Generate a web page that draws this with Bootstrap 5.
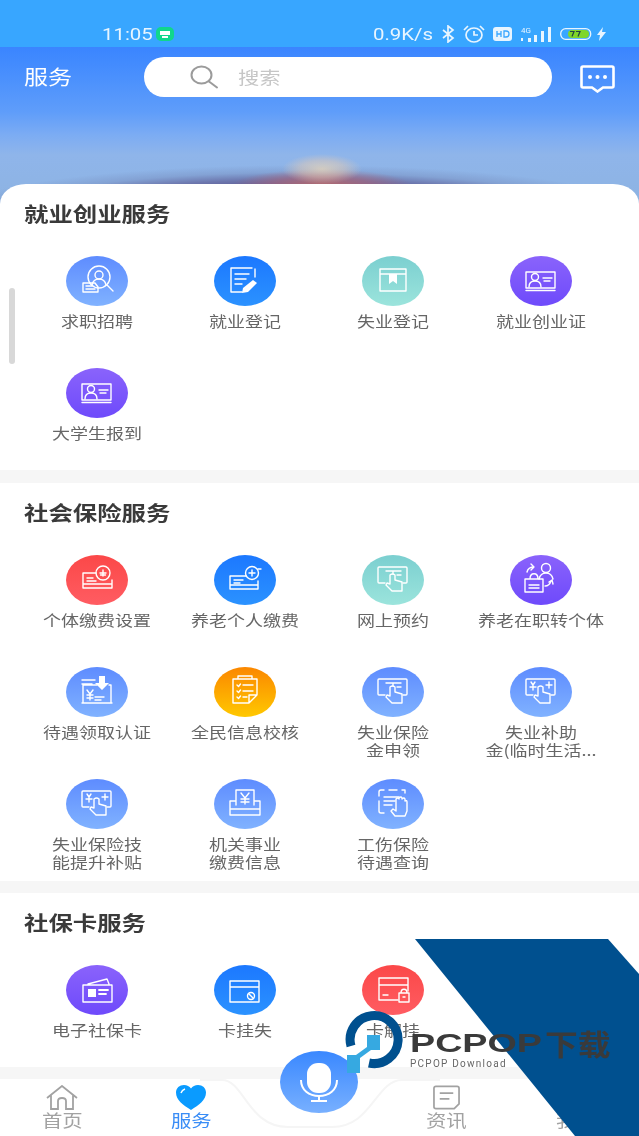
<!DOCTYPE html>
<html lang="zh-CN">
<head>
<meta charset="utf-8">
<title>服务</title>
<link href="https://cdn.jsdelivr.net/npm/bootstrap@5.3.0/dist/css/bootstrap.min.css" rel="stylesheet">
<style>
html,body{margin:0;background:#fff}
.app{width:639px;height:1136px;overflow:hidden;position:relative;font-family:"Noto Sans CJK SC","Noto Sans",sans-serif;filter:blur(.55px);background:#fff}
.stat{height:47px;background:#38a6ff;color:#e8f5ff;font-family:Roboto,"Liberation Sans",sans-serif;padding:20px 33px 0 102px;position:relative;z-index:2}
.stat-txt{display:inline-block;font-size:17px;line-height:26px;transform:scaleX(1.2);transform-origin:left center;white-space:nowrap}
.hdr{height:157px;padding-top:10px;background:
 radial-gradient(ellipse 40px 15px at 322px 122px,rgba(240,216,180,.7) 0,rgba(236,205,175,.45) 55%,rgba(230,190,160,0) 100%),
 radial-gradient(ellipse 90px 17px at 322px 139px,rgba(190,108,105,.9) 0,rgba(170,100,120,.6) 55%,rgba(140,90,130,0) 100%),
 radial-gradient(ellipse 350px 50px at 300px 168px,#5f5f98 0,#5f5f98 60%,rgba(100,104,160,.8) 71%,rgba(115,135,185,.4) 85%,rgba(125,155,210,0) 100%),
 linear-gradient(#3a85ff 0,#4a90fd 30px,#5f9dfa 65px,#7cacf3 88px,#8fb5ea 108px,#8db3e2 157px)}
.hdr-t{width:144px;padding-left:24px;color:#fff;font-size:20px;line-height:40px;white-space:nowrap}
.hdr-t span{display:inline-block;transform:scaleX(1.2);transform-origin:left center}
.pill{width:408px;height:40px;background:#fff;border-radius:20px;padding-left:46px}
.pill-t{color:#c6c6c6;font-size:17.5px;margin-left:19px;display:inline-block;transform:scaleX(1.22);transform-origin:left center}
.msg{margin-left:28px;margin-top:8px}
.sect{background:#fff;padding:0 24px 0 23px;position:relative;display:flow-root}
.sect-first{margin-top:-20px;border-radius:26px 26px 0 0/20px 20px 0 0}
.sect-h{height:72px;padding-top:12px;line-height:36px;font-size:20px;font-weight:700;color:#3a3a3a;white-space:nowrap;margin:0}
.sect-h span{display:inline-block;margin-left:1px;transform:scaleX(1.22);transform-origin:left center}
.gridwrap{margin-bottom:-10px}
.cell{height:112px;text-align:center}
.bub{width:62px;height:50px;border-radius:50%;margin:0 auto 6px;display:block}
.bub svg{display:block;width:62px;height:50px;fill:none;stroke:#fff;stroke-width:1.4;stroke-linejoin:round;stroke-linecap:round}
.g-lb{background:linear-gradient(#5e8cff,#80b2ff)}
.g-bl{background:linear-gradient(#1c78ff,#2b92ff)}
.g-te{background:linear-gradient(#7bcfd0,#9be4dc)}
.g-pu{background:linear-gradient(#8a63fb,#6e4afb)}
.g-re{background:linear-gradient(#fb4848,#ff5c62)}
.g-or{background:linear-gradient(#fb8700,#ffc800)}
.lbl{color:#666;font-size:15px;line-height:18px;white-space:nowrap;transform:scaleX(1.2)}
.band{height:12px;background:#f6f6f6}
.band-a{height:13px}
.tabs{height:57px;background:#fff;position:relative}
.tab{flex:1 1 0;text-align:center;padding-top:6px;color:#a2a2a2;font-size:17px;line-height:20px;position:relative}
.tab svg{display:block;margin:0 auto}
.tab span{display:block;margin-top:0;transform:scaleX(1.2);white-space:nowrap}
.tab-l{padding-right:4px}
.tab-m{padding-right:6px}
.tab-on{color:#3a8df6}
.notch{position:absolute;left:200px;top:0}
.micb{position:absolute;left:280px;top:1051px;width:78px;height:62px;border-radius:50%;background:linear-gradient(#3a88ff,#78b0ff)}
.sbar{position:absolute;left:9px;top:288px;width:6px;height:76px;border-radius:3px;background:#d8d8d8}
.wmk{position:absolute;left:0;top:0}
.w1,.w2,.w3{position:absolute;white-space:nowrap;transform-origin:left center;color:#3a3a3a}
.w1{left:410px;top:1025px;font:700 26px/36px "Liberation Sans",sans-serif;transform:scaleX(1.45)}
.w2{left:545px;top:1022px;font-size:29px;line-height:42px;font-weight:700;transform:scaleX(1.13)}
.w3{left:410px;top:1057px;font:400 10px/14px Roboto,sans-serif;letter-spacing:1.25px;color:#666}
</style>
</head>
<body>
<svg width="0" height="0" style="position:absolute">
<defs>
<symbol id="i-job" viewBox="0 0 62 50"><circle cx="33" cy="21" r="11"/><circle cx="33" cy="19" r="4"/><path d="M26 29c1-5 4-6 7-6s6 1 7 6M41 29l6 6"/><path d="M17 27h12l3 4v5H17zM20 30h6M20 33h9"/></symbol>
<symbol id="i-doc" viewBox="0 0 62 50"><path d="M38 12H17v24h11M41 13v8M21 18h14M21 23h11M21 28h7"/><path fill="#fff" stroke="none" d="M39 24l4 3-9 9-6 1 1-5z"/></symbol>
<symbol id="i-book" viewBox="0 0 62 50"><path d="M18 13h26v22H18zM18 18h26"/><path fill="#fff" stroke="none" d="M27 18h8v10l-4-3-4 3z"/></symbol>
<symbol id="i-id" viewBox="0 0 62 50"><path d="M16 16h29v16H16zM16 34.500h29"/><circle cx="25" cy="21" r="3.500"/><path d="M19 31c0-5 3-6 6-6s6 1 6 6M33 22h9M34 25h6"/></symbol>
<symbol id="i-rc" viewBox="0 0 62 50"><path d="M30 18H17v15h29v-8M17 29h29M21 23h6M21 26h9"/><circle cx="37" cy="18" r="7"/><path d="M34 18h6M37 15v6M34.500 20h5"/></symbol>
<symbol id="i-bc" viewBox="0 0 62 50"><path d="M32 21H16v13h28v-8M16 30h28M20 25h9M20 28h6"/><circle cx="38" cy="18" r="6.500"/><path d="M35 18h6M38 15v6M44 14h3"/></symbol>
<symbol id="i-hand" viewBox="0 0 62 50"><path d="M23 28h-6q-1 0-1-1V13q0-1 1-1h27q1 0 1 1v14q0 1-1 1h-3M24 16h15M31 16v3M35 20h4"/><path d="M28 20v9l-3-1-1 2 6 6h10V27l-7-2v-5q-2.500-2-5 0z"/></symbol>
<symbol id="i-pu" viewBox="0 0 62 50"><circle cx="36" cy="13" r="4.500"/><path d="M29 24c1-4 4-6 7-6s6 2 7 6M17 17c1-4 4-5 7-5M21 9l3 3-3 3M35 31c3 0 5-2 6-5M39 27l3-2 1 4"/><path d="M15 24h18v13H15zM20 24c0-7 8-7 8 0M19 30h10M19 33h10"/></symbol>
<symbol id="i-dl" viewBox="0 0 62 50"><path d="M16 13h13M16 17h10M31 18H17v18h28V18h-2M16 36h30"/><path fill="#fff" stroke="none" d="M33 9h6v7h4l-7 7-7-7h4z"/><path d="M21 23l3 4 3-4M24 27v6M21 28h6M21 31h6M29 30h9M29 33h6"/></symbol>
<symbol id="i-chk" viewBox="0 0 62 50"><path d="M35 36H19V12h24v16zM35 36v-8h8M24 12V9h14v3"/><path d="M23 18l1.500 1.500 2-2.500M29 18h10M23 24l1.500 1.500 2-2.500M29 24h10M23 30l1.500 1.500 2-2.500M29 30h4"/></symbol>
<symbol id="i-hy" viewBox="0 0 62 50"><path d="M23 28h-6q-1 0-1-1V13q0-1 1-1h27q1 0 1 1v14q0 1-1 1h-3M21 15l2 3 2-3M23 18v5M20 20h6M36 18h6M39 15v6"/><path d="M28 20v9l-3-1-1 2 6 6h10V27l-7-2v-5q-2.500-2-5 0z"/></symbol>
<symbol id="i-tray" viewBox="0 0 62 50"><path d="M22 22h-6v14h30V22h-6M16 30h30M22 26V11h18v15"/><path d="M27 14l4 5 4-5M31 19v6M27 20h8M27 23h8"/></symbol>
<symbol id="i-scan" viewBox="0 0 62 50"><path d="M22 11h-3q-2 0-2 2v4M27 11h8M40 11h3v3M17 22v10q0 2 2 2h3M22 18h15M22 22h11M22 26h8"/><path d="M33 37l-4-5 2-2 3 2V20q2-2 3 0v-1q2-2 3 0v1q2-2 3 0v2q2-1 2 1v9l-2 5z"/></symbol>
<symbol id="i-cs" viewBox="0 0 62 50"><path d="M17 20h29v17H17zM22 19l19-5 2 5"/><path fill="#fff" stroke="none" d="M22 24h8v8h-8z"/><path d="M33 25h9M33 29h7" stroke-width="1.800"/></symbol>
<symbol id="i-cb" viewBox="0 0 62 50"><path d="M16 16h29v21H16zM16 22h29"/><circle cx="37" cy="31" r="3.500"/><path d="M34.500 28.500l5 5"/></symbol>
<symbol id="i-cl" viewBox="0 0 62 50"><path d="M36 35H17V13h29v13M17 20h29M21 30h5"/><path d="M37 28h10v9H37zM39 28c0-5 6-5 6 0M41 32h2"/></symbol>
</defs>
</svg>

<div class="app">
  <div class="stat d-flex align-items-center">
    <div class="stat-txt" style="width:50px">11:05</div>
    <svg class="ms-1" width="18" height="14" viewBox="0 0 18 14"><rect width="18" height="14" rx="5" fill="#10d78c"/><path d="M4 4h10v4H4z" fill="#fff"/><path d="M6 9h6v2H6z" fill="#fff"/></svg>
    <div class="ms-auto stat-txt" style="width:64px">0.9K/s</div>
    <svg class="ms-1" width="14" height="18" viewBox="0 0 14 18" fill="none" stroke="#e8f5ff" stroke-width="1.700"><path d="M2 5l10 8-5 4V1l5 4-10 8"/></svg>
    <svg class="ms-2" width="22" height="18" viewBox="0 0 22 18" fill="none" stroke="#e8f5ff" stroke-width="1.700"><ellipse cx="11" cy="10" rx="8" ry="7"/><path d="M11 6v4h4M1 5l4-4M21 5l-4-4"/></svg>
    <svg class="ms-2" width="19" height="14" viewBox="0 0 19 14"><rect width="19" height="14" rx="3" fill="#e8f5ff"/><path d="M4 4v6M8 4v6M4 7h4M11 4v6h2q3 0 3-3t-3-3z" stroke="#38a6ff" stroke-width="1.300" fill="none"/></svg>
    <svg class="ms-2" width="36" height="18" viewBox="0 0 36 18" fill="#e8f5ff"><rect x="1" y="13" width="2" height="3"/><rect x="8" y="13" width="3" height="4"/><rect x="14" y="10" width="3" height="7"/><rect x="21" y="6" width="3" height="11"/><rect x="28" y="2" width="3" height="15"/><text x="1" y="8" font-size="8" font-family="Roboto,sans-serif">4G</text></svg>
    <svg class="ms-1" width="33" height="12" viewBox="0 0 33 12"><rect x=".7" y=".7" width="30" height="10.600" rx="5" fill="none" stroke="#e8f5ff" stroke-width="1.300"/><rect x="8" y="2" width="21" height="8" rx="4" fill="#7fd62a"/><path d="M10 3.500h4l-2 5M16 3.500h4l-2 5" fill="none" stroke="#244" stroke-width="1.200"/></svg>
    <svg class="ms-1" width="9" height="14" viewBox="0 0 9 14"><path d="M6 0L0 8h3l-1 6 7-9H5z" fill="#e8f5ff"/></svg>
  </div>

  <div class="hdr d-flex align-items-start">
    <div class="hdr-t"><span>服务</span></div>
    <div class="pill d-flex align-items-center">
      <svg width="29" height="24" viewBox="0 0 29 24" fill="none" stroke="#9b9b9b" stroke-width="2"><ellipse cx="11.500" cy="10" rx="10" ry="8.500"/><path d="M19 16.500l8 6" stroke-linecap="round"/></svg>
      <span class="pill-t">搜索</span>
    </div>
    <svg class="msg" width="35" height="28" viewBox="0 0 35 28" fill="none"><path d="M3 1.500h29q1.500 0 1.500 1.500v18q0 1.500-1.500 1.500H23l-5.500 4-5.500-4H3q-1.500 0-1.500-1.500V3Q1.500 1.500 3 1.500z" stroke="#fff" stroke-width="2.600"/><circle cx="10" cy="12" r="2" fill="#fff"/><circle cx="17.500" cy="12" r="2" fill="#fff"/><circle cx="25" cy="12" r="2" fill="#fff"/></svg>
  </div>

  <section class="sect sect-first">
    <h2 class="sect-h"><span>就业创业服务</span></h2>
    <div class="row g-0 gridwrap">
      <div class="col-3 cell"><div class="bub g-lb"><svg><use href="#i-job"/></svg></div><div class="lbl">求职招聘</div></div>
      <div class="col-3 cell"><div class="bub g-bl"><svg><use href="#i-doc"/></svg></div><div class="lbl">就业登记</div></div>
      <div class="col-3 cell"><div class="bub g-te"><svg><use href="#i-book"/></svg></div><div class="lbl">失业登记</div></div>
      <div class="col-3 cell"><div class="bub g-pu"><svg><use href="#i-id"/></svg></div><div class="lbl">就业创业证</div></div>
      <div class="col-3 cell"><div class="bub g-pu"><svg><use href="#i-id"/></svg></div><div class="lbl">大学生报到</div></div>
    </div>
  </section>
  <div class="band band-a"></div>

  <section class="sect">
    <h2 class="sect-h"><span>社会保险服务</span></h2>
    <div class="row g-0 gridwrap">
      <div class="col-3 cell"><div class="bub g-re"><svg><use href="#i-rc"/></svg></div><div class="lbl">个体缴费设置</div></div>
      <div class="col-3 cell"><div class="bub g-bl"><svg><use href="#i-bc"/></svg></div><div class="lbl">养老个人缴费</div></div>
      <div class="col-3 cell"><div class="bub g-te"><svg><use href="#i-hand"/></svg></div><div class="lbl">网上预约</div></div>
      <div class="col-3 cell"><div class="bub g-pu"><svg><use href="#i-pu"/></svg></div><div class="lbl">养老在职转个体</div></div>
      <div class="col-3 cell"><div class="bub g-lb"><svg><use href="#i-dl"/></svg></div><div class="lbl">待遇领取认证</div></div>
      <div class="col-3 cell"><div class="bub g-or"><svg><use href="#i-chk"/></svg></div><div class="lbl">全民信息校核</div></div>
      <div class="col-3 cell"><div class="bub g-lb"><svg><use href="#i-hand"/></svg></div><div class="lbl">失业保险<br>金申领</div></div>
      <div class="col-3 cell"><div class="bub g-lb"><svg><use href="#i-hy"/></svg></div><div class="lbl">失业补助<br>金(临时生活...</div></div>
      <div class="col-3 cell"><div class="bub g-lb"><svg><use href="#i-hy"/></svg></div><div class="lbl">失业保险技<br>能提升补贴</div></div>
      <div class="col-3 cell"><div class="bub g-lb"><svg><use href="#i-tray"/></svg></div><div class="lbl">机关事业<br>缴费信息</div></div>
      <div class="col-3 cell"><div class="bub g-lb"><svg><use href="#i-scan"/></svg></div><div class="lbl">工伤保险<br>待遇查询</div></div>
    </div>
  </section>
  <div class="band"></div>

  <section class="sect">
    <h2 class="sect-h"><span>社保卡服务</span></h2>
    <div class="row g-0 gridwrap">
      <div class="col-3 cell"><div class="bub g-pu"><svg><use href="#i-cs"/></svg></div><div class="lbl">电子社保卡</div></div>
      <div class="col-3 cell"><div class="bub g-bl"><svg><use href="#i-cb"/></svg></div><div class="lbl">卡挂失</div></div>
      <div class="col-3 cell"><div class="bub g-re"><svg><use href="#i-cl"/></svg></div><div class="lbl">卡解挂</div></div>
    </div>
  </section>
  <div class="band"></div>

  <nav class="tabs d-flex">
    <svg class="notch" width="240" height="58" viewBox="0 0 240 58" fill="none"><path d="M0 1h22c22 0 26 47 66 47h44c40 0 44-47 70-47h38" stroke="#f5f5f5" stroke-width="2"/></svg>
    <div class="tab tab-l"><svg width="32" height="25" viewBox="0 0 32 25" fill="none" stroke="#a2a2a2" stroke-width="1.800"><path d="M1 13L16 1l15 12M5 10v14h7v-8q0-3 4-3t4 3v8h7V10"/></svg><span>首页</span></div>
    <div class="tab tab-m tab-on"><svg width="32" height="25" viewBox="0 0 32 25"><path d="M16 25C8 20 1 15 1 7.500 1 3 4.500 0 9 0c3 0 5.500 1.500 7 3.500C17.500 1.500 20 0 23 0c4.500 0 8 3 8 7.500C31 15 24 20 16 25z" fill="#0a9bff"/><path d="M6 8q1-3 4-4" stroke="#fff" stroke-width="1.500" fill="none"/></svg><span>服务</span></div>
    <div class="tab"></div>
    <div class="tab tab-m"><svg width="27" height="25" viewBox="0 0 28 25" fill="none" stroke="#a2a2a2" stroke-width="1.800"><path d="M3 1h22q2 0 2 2v16l-5 5H3q-2 0-2-2V3q0-2 2-2zM7 8h14M7 14h10"/></svg><span>资讯</span></div>
    <div class="tab"><div style="height:25px"></div><span>我的</span></div>
  </nav>

  <div class="micb d-flex align-items-center justify-content-center">
    <svg width="40" height="40" viewBox="0 0 40 40" fill="none"><rect x="8" y="1" width="24" height="30" rx="11" fill="#fff"/><path d="M2 18c0 10 8 16 18 16s18-6 18-16M20 34v5M12 39h16" stroke="#fff" stroke-width="2"/></svg>
  </div>
  <div class="sbar"></div>

  <svg class="wmk" width="639" height="1136" viewBox="0 0 639 1136">
    <path d="M415 939H608L639 974V1136H575z" fill="#00508f"/>
    <path d="M351 1046A24 24 0 1 1 369 1063" fill="none" stroke="#00508f" stroke-width="9"/>
    <path d="M367 1035h13v15h-9l-11 8v15h-13v-18h9l11-8z" fill="#36a9e1"/>
  </svg>
  <div class="w1">PCPOP</div>
  <div class="w2">下载</div>
  <div class="w3">PCPOP Download</div>
</div>
<script src="https://cdn.jsdelivr.net/npm/bootstrap@5.3.0/dist/js/bootstrap.bundle.min.js"></script>
</body>
</html>
